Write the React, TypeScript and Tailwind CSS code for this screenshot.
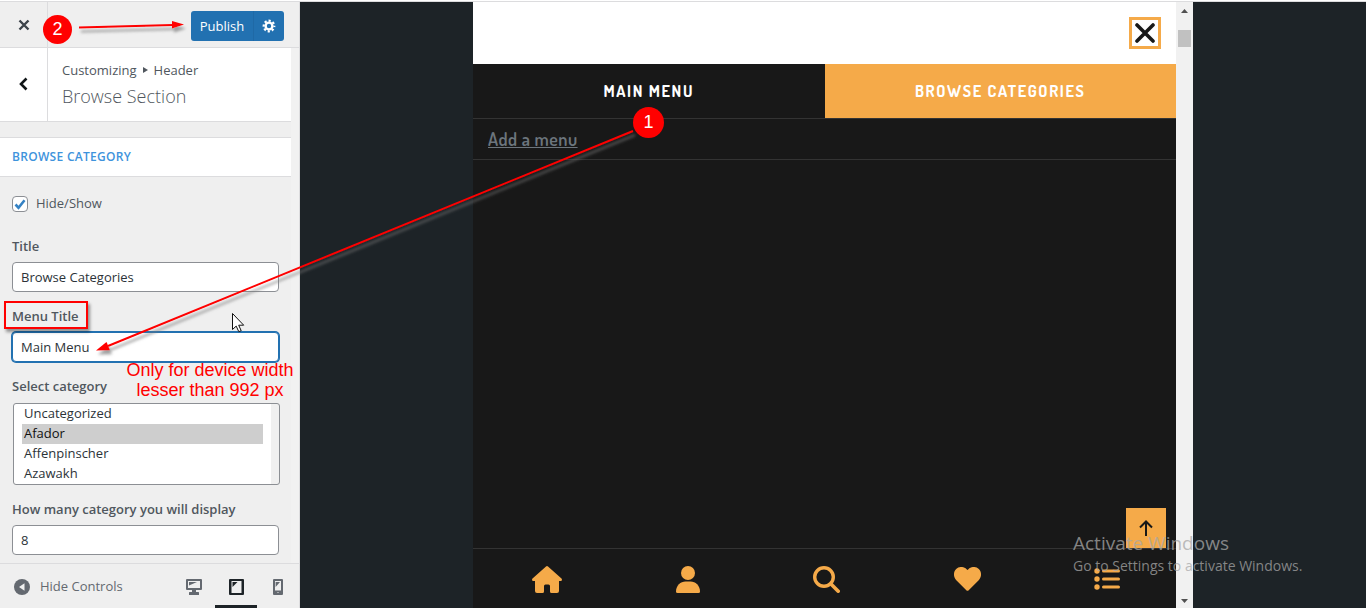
import { useState } from "react";
import type { ReactNode } from "react";

const CATEGORIES = ["Uncategorized", "Afador", "Affenpinscher", "Azawakh"];

function Field({ id, label, children }: { id: string; label: string; children: ReactNode }) {
  return (
    <div>
      <label htmlFor={id} className="mb-1.5 block text-[13px] leading-5 font-semibold text-[#50575e]">
        {label}
      </label>
      {children}
    </div>
  );
}

const inputClass =
  "block h-[30px] w-full rounded border border-[#8c8f94] bg-white px-2 text-[13px] text-[#2c3338] outline-none";

// Top bar: close, publish and publish settings
function SidebarHeader() {
  return (
    <header className="flex h-[46px] shrink-0 items-center border-b border-[#dcdcde]">
      <button aria-label="Close" className="flex w-12 items-center justify-center self-stretch border-r border-[#dcdcde]">
        <svg width="12" height="12" viewBox="0 0 12 12" stroke="#3c434a" strokeWidth="2.4">
          <path d="M1.5 1.5l9 9M10.5 1.5l-9 9" />
        </svg>
      </button>
      <div className="mt-0.5 mr-[15px] ml-auto flex h-[30px] overflow-hidden rounded-[3px] bg-[#2271b1] text-white">
        <button className="w-[62px] pt-0.5 text-[13px]">Publish</button>
        <button aria-label="Publish Settings" className="flex w-[31px] items-center justify-center border-l border-[#1f69a6]">
          <svg width="14" height="14" viewBox="0 0 14 14" fill="none" stroke="white">
            <circle cx="7" cy="7" r="3.4" strokeWidth="2.4" />
            <circle cx="7" cy="7" r="5.3" strokeWidth="2.2" strokeDasharray="2.2 1.963" strokeDashoffset="1.1" />
          </svg>
        </button>
      </div>
    </header>
  );
}

function SidebarFooter() {
  return (
    <footer className="flex h-[45px] shrink-0 items-stretch justify-between border-t border-[#dcdcde] text-[#646970]">
      <button className="flex items-center gap-2.5 pt-0.5 pl-3.5 text-[13px]">
        <svg width="16" height="16" viewBox="0 0 16 16">
          <circle cx="8" cy="8" r="8" fill="#646970" />
          <path d="M10.5 4.2v7.6L5 8z" fill="#efefef" />
        </svg>
        Hide Controls
      </button>
      <div className="flex">
        <button aria-label="Desktop preview" className="flex w-[42px] items-center justify-center pt-0.5">
          <svg width="16" height="16" viewBox="0 0 16 16">
            <path
              fillRule="evenodd"
              fill="#646970"
              d="M1 0h14q1 0 1 1v9q0 1-1 1h-5v2h2.5q.5 0 .5 1v2H3v-2q0-1 .5-1H6v-2H1q-1 0-1-1V1q0-1 1-1zm1 2v7h12V2z"
            />
            <path d="M3 3h8L3 6.5z" fill="#646970" />
          </svg>
        </button>
        <button
          aria-label="Tablet preview"
          aria-pressed="true"
          className="flex w-[42px] items-center justify-center border-t-3 border-b-3 border-t-transparent border-b-[#1d2327] pt-0.5"
        >
          <svg width="15" height="16" viewBox="0 0 15 16">
            <path fillRule="evenodd" fill="#1d2327" d="M1 0h13q1 0 1 1v14q0 1-1 1H1q-1 0-1-1V1q0-1 1-1zm1.5 2v12h10V2z" />
            <path d="M3.5 3h5l-5 5z" fill="#1d2327" />
          </svg>
        </button>
        <button aria-label="Mobile preview" className="flex w-[42px] items-center justify-center pt-0.5">
          <svg width="10" height="16" viewBox="0 0 10 16">
            <path fillRule="evenodd" fill="#646970" d="M1 0h8q1 0 1 1v14q0 1-1 1H1q-1 0-1-1V1q0-1 1-1zm1 2v9.5h6V2z" />
            <path d="M2.6 3H7L2.6 8z" fill="#646970" />
            <rect x="4" y="13" width="2" height="1" fill="#a7aaad" />
          </svg>
        </button>
      </div>
    </footer>
  );
}

function Sidebar() {
  const [visible, setVisible] = useState(true);
  const [title, setTitle] = useState("Browse Categories");
  const [menuTitle, setMenuTitle] = useState("Main Menu");
  const [count, setCount] = useState("8");
  const [selected, setSelected] = useState(["Afador"]);

  return (
    <aside className="flex w-[300px] shrink-0 flex-col border-r border-[#dcdcde] bg-[#efefef]">
      <SidebarHeader />
      <div className="min-h-0 flex-1 overflow-hidden bg-[#f1f1f1] pr-2">
        <div className="min-h-full bg-[#efefef]">
          <div className="flex h-[74px] border-b border-[#dcdcde] bg-white">
            <button aria-label="Back" className="flex w-12 items-center justify-center border-r border-[#dcdcde] pb-0.5">
              <svg width="9" height="14" viewBox="0 0 9 14" fill="none" stroke="#101517" strokeWidth="2.6">
                <path d="M7.5 1.5L2 7l5.500 5.500" />
              </svg>
            </button>
            <div className="flex flex-col justify-center gap-0.5 pl-3.5 text-[#50575e]">
              <p className="flex items-center gap-1.5 text-[13px] leading-5">
                Customizing
                <svg width="5" height="6" viewBox="0 0 5 6" fill="#50575e">
                  <path d="M0 0l5 3-5 3z" />
                </svg>
                Header
              </p>
              <h3 className="text-[18px] leading-7 font-light">Browse Section</h3>
            </div>
          </div>

          <h4 className="mt-[15px] border-y border-[#dcdcde] bg-white px-3 text-[12px] leading-[38px] font-semibold tracking-wide text-[#3e93dc]">
            BROWSE CATEGORY
          </h4>

          <form className="flex flex-col gap-3.5 pt-[17px] pr-3 pl-3">
            <label className="mb-2 flex h-5 items-center gap-2 text-[13px] text-[#50575e]">
              <input
                type="checkbox"
                checked={visible}
                onChange={(e) => setVisible(e.target.checked)}
                className="peer sr-only"
              />
              <span className="flex size-4 items-center justify-center rounded border border-[#8c8f94] bg-white text-transparent peer-checked:text-[#3582c4]">
                <svg width="12" height="11" viewBox="0 0 12 11" fill="none" stroke="currentColor" strokeWidth="2.6">
                  <path d="M1.500 5.500l3 3.200L10.500 1.200" />
                </svg>
              </span>
              Hide/Show
            </label>
            <Field id="title" label="Title">
              <input id="title" value={title} onChange={(e) => setTitle(e.target.value)} className={inputClass} />
            </Field>
            <Field id="menu-title" label="Menu Title">
              <input
                id="menu-title"
                value={menuTitle}
                onChange={(e) => setMenuTitle(e.target.value)}
                className="block h-[30px] w-full rounded border border-[#2271b1] bg-white px-2 text-[13px] text-[#2c3338] ring-1 ring-[#2271b1] outline-none"
              />
            </Field>
            <Field id="category" label="Select category">
              <select
                id="category"
                multiple
                size={4}
                value={selected}
                onChange={(e) => setSelected(Array.from(e.target.selectedOptions, (o) => o.value))}
                className="mt-[7px] ml-px block h-[82px] w-full overflow-hidden rounded-[3px] border border-[#8c8f94] bg-[linear-gradient(to_left,#f0f0f0_8px,#ffffff_8px)] pr-4 pl-2 text-[13px] text-[#2c3338] [scrollbar-width:none]"
              >
                {CATEGORIES.map((name) => (
                  <option key={name} className="h-5 px-0.5 py-0 leading-5">
                    {name}
                  </option>
                ))}
              </select>
            </Field>
            <Field id="count" label="How many category you will display">
              <input id="count" value={count} onChange={(e) => setCount(e.target.value)} className={inputClass} />
            </Field>
          </form>
        </div>
      </div>
      <SidebarFooter />
    </aside>
  );
}

function BottomNav() {
  return (
    <nav className="flex h-[60px] items-center justify-between border-t border-[#333333] pt-px pr-14 pl-[59px] text-[#f5aa49]">
      <a href="#home" aria-label="Home">
        <svg width="30" height="27" viewBox="0 0 30 27" fill="currentColor">
          <path d="M14 .5q1-.8 2 0L29.500 12.500q.8 1 .2 2-.4.600-1.400.600H27V25q0 2-2 2h-5.500q-1.500 0-1.500-1.500V20q0-1.500-1.500-1.500h-3Q12 18.500 12 20v5.500Q12 27 10.500 27H5q-2 0-2-2v-9.900H1.700q-1 0-1.400-.6-.6-1 .2-2z" />
        </svg>
      </a>
      <a href="#account" aria-label="Account">
        <svg width="24" height="27" viewBox="0 0 24 27" fill="currentColor">
          <circle cx="12" cy="7" r="7" />
          <path d="M0 25.500C0 19.500 4.500 15.500 9.500 15.500h5C19.500 15.500 24 19.500 24 25.500q0 1.500-1.500 1.500h-21Q0 27 0 25.500z" />
        </svg>
      </a>
      <a href="#search" aria-label="Search">
        <svg width="27" height="27" viewBox="0 0 27 27" fill="none" stroke="currentColor" strokeLinecap="round">
          <circle cx="11" cy="11" r="9.300" strokeWidth="3.400" />
          <path d="M18 18l7.200 7.200" strokeWidth="3.600" />
        </svg>
      </a>
      <a href="#wishlist" aria-label="Wishlist">
        <svg width="27" height="24" viewBox="0 0 27 24" fill="currentColor">
          <path d="M12.300 23.200L2.300 13.200C-1 9.800-.6 4.600 2.200 2 5.300-.9 10-.6 12.600 2.200l.9.900.9-.9C17-.6 21.700-.9 24.800 2c2.800 2.600 3.200 7.800-.1 11.200l-10 10q-1.200 1.200-2.400 0z" />
        </svg>
      </a>
      <a href="#menu" aria-label="Menu">
        <svg width="26" height="22" viewBox="0 0 26 22" fill="currentColor">
          <circle cx="3" cy="3" r="2.700" />
          <circle cx="3" cy="11" r="2.700" />
          <circle cx="3" cy="19" r="2.700" />
          <rect x="8" y="1.500" width="18" height="3" rx="1.500" />
          <rect x="8" y="9.500" width="18" height="3" rx="1.500" />
          <rect x="8" y="17.500" width="18" height="3" rx="1.500" />
        </svg>
      </a>
    </nav>
  );
}

// Tablet sized preview of the site
function Preview() {
  return (
    <main className="flex min-w-0 flex-1 justify-center bg-[#1d2327]">
      <div className="flex w-full max-w-[720px] bg-[#181818]">
        <div className="relative flex min-w-0 flex-1 flex-col font-[Dosis,Roboto,sans-serif]">
          <div className="flex h-[62px] items-center justify-end bg-white pr-[15px]">
            <button aria-label="Close menu" className="flex size-8 items-center justify-center border-3 border-[#f5aa49]">
              <svg width="20" height="20" viewBox="0 0 20 20" stroke="#181818" strokeWidth="3.600" strokeLinecap="round">
                <path d="M2 2l16 16M18 2L2 18" />
              </svg>
            </button>
          </div>
          <div className="flex h-[55px] border-b border-[#333333] text-[16px] font-bold tracking-widest text-white">
            <button className="flex-1">MAIN MENU</button>
            <button className="flex-1 bg-[#f5aa49]">BROWSE CATEGORIES</button>
          </div>
          <div className="flex h-[41px] items-center border-b border-[#333333] px-[15px]">
            <a href="#add-menu" className="text-[18px] font-semibold tracking-wide text-[#6c757d] underline">
              Add a menu
            </a>
          </div>
          <div className="flex-1" />
          <BottomNav />
          <button
            aria-label="Back to top"
            className="absolute right-2.5 bottom-[60px] flex size-10 items-center justify-center bg-[#f5aa49]"
          >
            <svg width="14" height="16" viewBox="0 0 14 16" fill="none" stroke="#181818" strokeWidth="2">
              <path d="M7 16V1.500M1 7.500l6-6 6 6" />
            </svg>
          </button>
        </div>
        <div className="flex w-[17px] flex-col items-center bg-[#f1f1f1] pt-[7px] pb-[5px]">
          <svg width="7" height="4" viewBox="0 0 7 4" fill="#505050">
            <path d="M0 4l3.500-4L7 4z" />
          </svg>
          <div className="mt-[17px] h-[17px] w-[13px] bg-[#c1c1c1]" />
          <svg className="mt-auto" width="7" height="4" viewBox="0 0 7 4" fill="#505050">
            <path d="M0 0l3.500 4L7 0z" />
          </svg>
        </div>
      </div>
    </main>
  );
}

// Numbered callouts and arrows drawn over the screen
function Annotations() {
  return (
    <div className="pointer-events-none absolute inset-0 overflow-hidden">
      <svg className="absolute top-0 left-0" width="700" height="400" viewBox="0 0 700 400">
        <defs>
          <filter id="soft" x="-10%" y="-50%" width="120%" height="200%" filterUnits="objectBoundingBox">
            <feDropShadow dx="2" dy="4" stdDeviation="1.500" floodColor="#777777" floodOpacity="0.7" />
          </filter>
        </defs>
        <g filter="url(#soft)" fill="#ff0000">
          <path d="M633 131L108 346" stroke="#ff0000" strokeWidth="2" />
          <path d="M96 350.500l10.500-8.500 3.500 8.200z" />
          <path d="M79 27.500l94-2.500" stroke="#ff0000" strokeWidth="2" />
          <path d="M184 24.500l-12-3.500v7.500z" />
        </g>
        <path d="M232.500 313.500v16l3.700-3.400 2.600 5.600 2.400-1-2.500-5.500h5z" fill="white" stroke="#111111" />
      </svg>
      <span className="absolute top-[107px] left-[633px] flex size-[31px] items-center justify-center rounded-full bg-[#ff0000] font-['Liberation_Sans',sans-serif] text-[18px] text-white">
        1
      </span>
      <span className="absolute top-[15px] left-[43px] flex size-[29px] items-center justify-center rounded-full bg-[#ff0000] font-['Liberation_Sans',sans-serif] text-[18px] text-white">
        2
      </span>
      <div className="absolute top-[301px] left-1 h-[28px] w-[84px] border-2 border-[#ff0000] shadow-[2px_3px_3px_rgba(0,0,0,0.4)]" />
      <p className="absolute top-[360px] left-[110px] w-[200px] text-center font-['Liberation_Sans',sans-serif] text-[18px] leading-5 text-[#ff0000]">
        Only for device width
        <br />
        lesser than 992 px
      </p>
      <div className="absolute top-[531px] left-[1073px] whitespace-nowrap text-[#a8a8a8]/75">
        <p className="text-[19px] leading-6">Activate Windows</p>
        <p className="text-[14px] leading-[22px]">Go to Settings to activate Windows.</p>
      </div>
    </div>
  );
}

export default function App() {
  return (
    <div className="relative flex h-screen flex-col overflow-hidden bg-white font-['Segoe_UI','Open_Sans',sans-serif]">
      <div className="mt-px h-px shrink-0 bg-[#dcdcde]" />
      <div className="flex min-h-0 flex-1">
        <Sidebar />
        <Preview />
      </div>
      <Annotations />
    </div>
  );
}
